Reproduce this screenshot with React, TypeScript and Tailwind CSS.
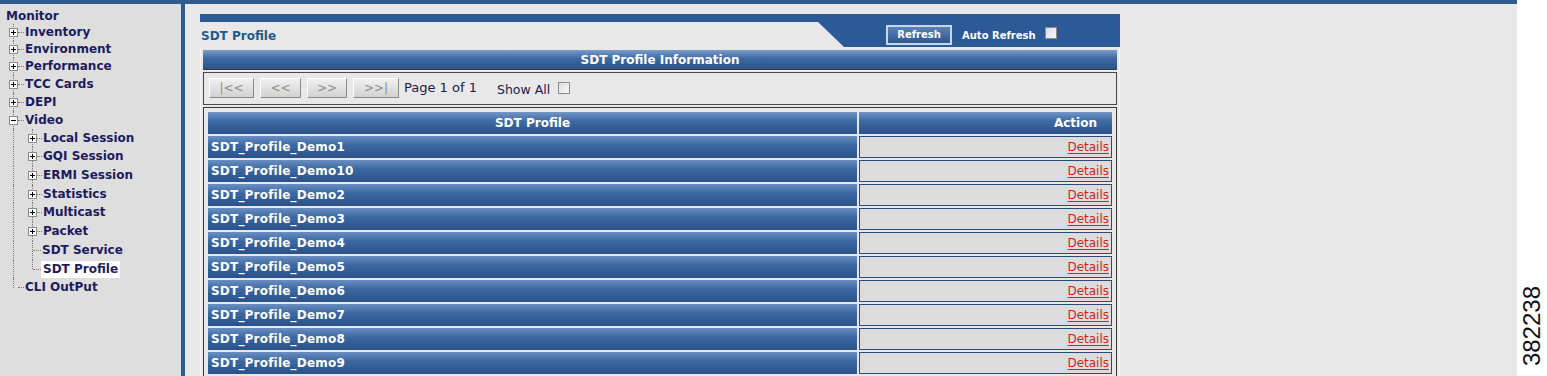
import React from 'react';

const navItems: { label: string; level: 0 | 1 | 2; icon?: 'plus' | 'minus'; h: number; last?: boolean; active?: boolean }[] = [
  { label: 'Monitor', level: 0, h: 17 },
  { label: 'Inventory', level: 1, icon: 'plus', h: 17 },
  { label: 'Environment', level: 1, icon: 'plus', h: 17 },
  { label: 'Performance', level: 1, icon: 'plus', h: 17 },
  { label: 'TCC Cards', level: 1, icon: 'plus', h: 18 },
  { label: 'DEPI', level: 1, icon: 'plus', h: 18 },
  { label: 'Video', level: 1, icon: 'minus', h: 18 },
  { label: 'Local Session', level: 2, icon: 'plus', h: 18 },
  { label: 'GQI Session', level: 2, icon: 'plus', h: 19 },
  { label: 'ERMI Session', level: 2, icon: 'plus', h: 19 },
  { label: 'Statistics', level: 2, icon: 'plus', h: 18 },
  { label: 'Multicast', level: 2, icon: 'plus', h: 19 },
  { label: 'Packet', level: 2, icon: 'plus', h: 19 },
  { label: 'SDT Service', level: 2, h: 19 },
  { label: 'SDT Profile', level: 2, h: 18, last: true, active: true },
  { label: 'CLI OutPut', level: 1, h: 19, last: true },
];

const profiles = [
  'SDT_Profile_Demo1',
  'SDT_Profile_Demo10',
  'SDT_Profile_Demo2',
  'SDT_Profile_Demo3',
  'SDT_Profile_Demo4',
  'SDT_Profile_Demo5',
  'SDT_Profile_Demo6',
  'SDT_Profile_Demo7',
  'SDT_Profile_Demo8',
  'SDT_Profile_Demo9',
];

const font = "font-['DejaVu_Sans','Verdana',sans-serif]";

function TreeIcon({ kind }: { kind: 'plus' | 'minus' }) {
  return (
    <svg width="9" height="9" viewBox="0 0 9 9" className="relative z-10 block">
      <rect x="0.5" y="0.5" width="8" height="8" fill="#ffffff" stroke="#8c8c8c" />
      <path d="M2 4.5h5" stroke="#000" />
      {kind === 'plus' && <path d="M4.5 2v5" stroke="#000" />}
    </svg>
  );
}

// one gutter column of the tree: dotted vertical line, optional icon
function Gutter({ icon, half }: { icon?: 'plus' | 'minus'; half?: boolean }) {
  return (
    <div className="relative flex h-full w-[9px] shrink-0 items-center justify-center">
      <div
        className={`absolute left-[4px] top-0 w-0 border-l border-dotted border-[#7a7a7a] ${half ? 'h-1/2' : 'h-full'}`}
      />
      {icon && <TreeIcon kind={icon} />}
    </div>
  );
}

function Sidebar() {
  return (
    <div className={`w-[181px] shrink-0 bg-[#dedede] pt-[3px] ${font} text-[12px] font-bold text-[#1b1b5e]`}>
      {navItems.map((item) => {
        if (item.level === 0) {
          return (
            <div key={item.label} style={{ height: item.h }} className="flex items-center pl-[6px]">
              {item.label}
            </div>
          );
        }
        return (
          <div key={item.label} style={{ height: item.h }} className="flex items-center pl-[9px]">
            <Gutter icon={item.level === 1 ? item.icon : undefined} half={item.level === 1 && item.last} />
            {item.level === 2 && (
              <>
                <div className="w-[10px]" />
                <Gutter icon={item.icon} half={item.last} />
              </>
            )}
            <div
              className={`border-t border-dotted border-[#7a7a7a] ${
                item.level === 2 && !item.icon ? 'ml-[-4px] w-[8px]' : item.level === 2 ? 'w-[5px]' : 'w-[6px]'
              }`}
            />
            <span className={`leading-[17px] ${item.active ? 'bg-white px-[2px]' : 'ml-[1px]'}`}>{item.label}</span>
          </div>
        );
      })}
    </div>
  );
}

function PagerButton({ label, w }: { label: string; w: string }) {
  return (
    <div
      className={`${w} flex h-[20px] items-center justify-center border border-t-white border-l-white border-b-[#8a8a8a] border-r-[#8a8a8a] bg-linear-to-b from-[#f0f0f0] to-[#d2d2d2] text-[12px] text-[#8c8c8c]`}
    >
      {label}
    </div>
  );
}

function Checkbox() {
  return <div className="h-[12px] w-[12px] border border-[#8c8c8c] bg-linear-to-br from-[#dcdcdc] to-[#fafafa]" />;
}

export default function App() {
  return (
    <div className={`flex h-[376px] w-[1547px] overflow-hidden bg-white ${font}`}>
      <div className="flex w-[1517px] shrink-0 flex-col overflow-hidden">
        <div className="h-[4px] shrink-0 bg-[#2f5c90]" />
        <div className="flex min-h-0 flex-1">
          <Sidebar />
          <div className="w-[4px] shrink-0 bg-[#2f5c90]" />
          <div className="flex-1 bg-[#e8e8e8] pl-[15px] pt-[10px]">
            <div className="w-[920px]">
              <div className="h-[8px] bg-[#2b5a96]" />
              <div className="flex h-[25px] items-stretch">
                <div className="flex flex-1 items-center pl-[1px] pt-[2px] text-[12px] font-bold text-[#1f5b8c]">
                  SDT Profile
                </div>
                <div className="flex w-[302px] items-center bg-[#2b5a96] pl-[68px] [clip-path:polygon(0_0,100%_0,100%_100%,26px_100%)]">
                  <div className="flex h-[20px] w-[66px] items-center justify-center border-2 border-[#c9d6e6] bg-linear-to-b from-[#5a82b6] to-[#2c5790] text-[10px] font-bold text-white">
                    Refresh
                  </div>
                  <span className="ml-[10px] pt-[2px] text-[10px] font-bold text-white">Auto Refresh</span>
                  <div className="mb-[4px] ml-[9px]">
                    <Checkbox />
                  </div>
                </div>
              </div>

              <div className="border-l border-r border-[#f4f4f4] px-[2px] pt-[3px]">
                <div className="flex h-[20px] items-center justify-center border-b border-[#3a3a3a] bg-linear-to-b from-[#7a9ccb] via-[#3d69a2] via-45% to-[#2b538c] text-[12px] font-bold text-white">
                  SDT Profile Information
                </div>

                <div className="mt-[2px] flex h-[33px] items-start border border-[#4a4a4a] pl-[5px] pt-[5px]">
                  <PagerButton label="|<<" w="w-[45px]" />
                  <div className="ml-[6px]">
                    <PagerButton label="<<" w="w-[41px]" />
                  </div>
                  <div className="ml-[6px]">
                    <PagerButton label=">>" w="w-[40px]" />
                  </div>
                  <div className="ml-[6px]">
                    <PagerButton label=">>|" w="w-[46px]" />
                  </div>
                  <span className="ml-[5px] text-[13px] leading-[20px] text-[#1b1b4e]">Page 1 of 1</span>
                  <span className="ml-[20px] pt-[2px] text-[12.5px] leading-[20px] text-[#1b1b4e]">Show All</span>
                  <div className="ml-[8px] mt-[4px]">
                    <Checkbox />
                  </div>
                </div>

                <div className="mt-[2px] border border-[#3c3c3c] p-[2px]">
                  <table className="w-[908px] table-fixed border-separate border-spacing-[2px] text-[12px]">
                    <colgroup>
                      <col className="w-[649px]" />
                      <col className="w-[253px]" />
                    </colgroup>
                    <thead>
                      <tr className="h-[22px]">
                        <th className="bg-linear-to-b from-[#7297c7] via-[#3f6ba4] via-40% to-[#2a5189] p-0 text-center font-bold text-white">
                          SDT Profile
                        </th>
                        <th className="bg-linear-to-b from-[#7297c7] via-[#3f6ba4] via-40% to-[#2a5189] p-0 pr-[15px] text-right font-bold text-white">
                          Action
                        </th>
                      </tr>
                    </thead>
                    <tbody>
                      {profiles.map((p) => (
                        <tr key={p} className="h-[22px]">
                          <td className="bg-linear-to-b from-[#6a90c2] via-[#3d69a2] via-40% to-[#2a5189] p-0 pl-[3px] font-bold tracking-[0.2px] text-white">
                            {p}
                          </td>
                          <td className="border border-[#2b4a7c] bg-[#dcdcdc] p-0 pr-[2px] text-right">
                            <span className="text-[#cc2424] underline underline-offset-2">Details</span>
                          </td>
                        </tr>
                      ))}
                    </tbody>
                  </table>
                </div>
              </div>
            </div>
          </div>
        </div>
      </div>
      <div className="flex flex-1 items-end justify-center pb-[10px]">
        <span className="rotate-180 font-['Liberation_Sans',Arial,sans-serif] text-[24px] leading-none text-[#111] [writing-mode:vertical-rl]">
          382238
        </span>
      </div>
    </div>
  );
}
